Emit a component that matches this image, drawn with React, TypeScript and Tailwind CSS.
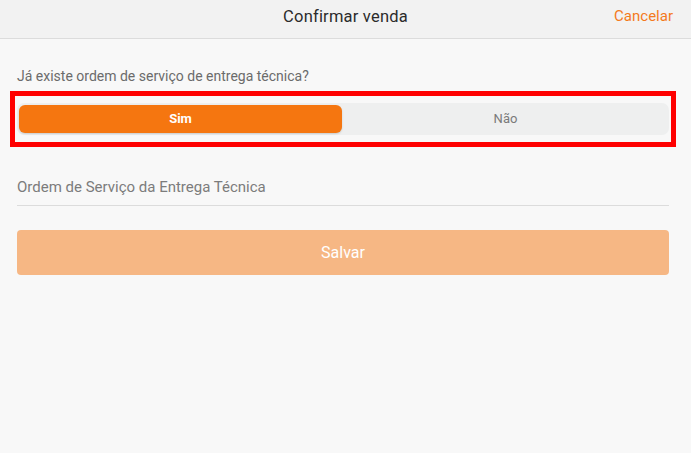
import React, { useState } from 'react';

const font = { fontFamily: 'Roboto, "Noto Sans", sans-serif' };

const App: React.FC = () => {
  const [answer, setAnswer] = useState<'sim' | 'nao'>('sim');
  const [os, setOs] = useState('');

  return (
    <div className="min-h-[453px] w-full bg-[#f8f8f8]" style={font}>
      {/* Cabeçalho */}
      <header className="relative flex h-[39px] items-center justify-center border-b border-[#dcdcdc] bg-[#f2f2f2] pb-[4px]">
        <h1 className="text-[16.5px] tracking-[0.2px] text-[#2b2b2b]">Confirmar venda</h1>
        <button className="absolute right-[18px] top-[5px] text-[15px] text-[#f47a1c]">Cancelar</button>
      </header>

      <div className="pl-[17px] pr-[22px] pt-[29px]">
        <p className="text-[14px] leading-[16px] text-[#6b6b6b]">Já existe ordem de serviço de entrega técnica?</p>

        {/* Seletor Sim / Não */}
        <div className="-mx-[7px] mt-[7px] border-[5px] border-[#ff0000] px-[2px] py-[7px]">
          <div className="flex h-[32px] gap-[2px] rounded-[7px] bg-[#eeefef] p-[2px]">
            <button
              onClick={() => setAnswer('sim')}
              className={`flex-1 rounded-[6px] text-[13px] ${
                answer === 'sim' ? 'bg-[#f57610] font-bold text-white shadow-[0_1px_2px_rgba(0,0,0,0.15)]' : 'text-[#7a7a7a]'
              }`}
            >
              Sim
            </button>
            <button
              onClick={() => setAnswer('nao')}
              className={`flex-1 rounded-[6px] text-[13px] ${
                answer === 'nao' ? 'bg-[#f57610] font-bold text-white shadow-[0_1px_2px_rgba(0,0,0,0.15)]' : 'text-[#7a7a7a]'
              }`}
            >
              Não
            </button>
          </div>
        </div>

        {/* Campo OS */}
        <input
          value={os}
          onChange={(e) => setOs(e.target.value)}
          placeholder="Ordem de Serviço da Entrega Técnica"
          className="mt-[27px] block h-[32px] w-full border-b border-[#dcdcdc] bg-transparent pb-[6px] text-[15px] text-[#444] outline-none placeholder:text-[#7c7c7c]"
        />

        <button
          disabled={!os}
          className="mt-[24px] flex h-[45px] w-full items-center justify-center rounded-[4px] bg-[#f57610] text-[16px] text-white disabled:bg-[#f6b784]"
        >
          Salvar
        </button>
      </div>
    </div>
  );
};

export default App;
